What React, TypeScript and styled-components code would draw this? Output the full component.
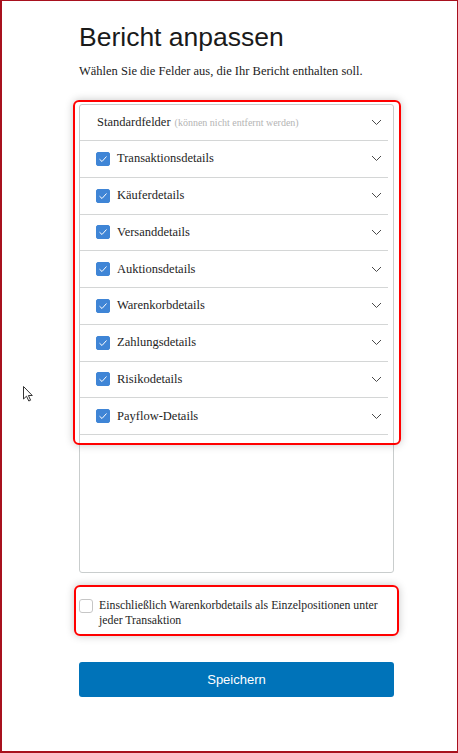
import { FC as ReactFC } from 'react'
import styled, { createGlobalStyle } from 'styled-components'

const GlobalStyle = createGlobalStyle`
  html, body {
    margin: 0;
    padding: 0;
    background: #fff;
  }
  * {
    box-sizing: border-box;
  }
`

const Frame = styled.div`
  position: relative;
  width: 458px;
  height: 753px;
  border: 1px solid #a8111e;
  border-left-width: 2px;
  border-bottom-width: 2px;
  background: #fff;
  padding: 0 0 0 77px;
  display: flex;
  flex-direction: column;
`

const Column = styled.div`
  width: 315px;
  display: flex;
  flex-direction: column;
`

const Title = styled.h1`
  margin: 20px 0 0;
  font-family: 'Liberation Sans', Arial, sans-serif;
  font-size: 26.5px;
  font-weight: 400;
  line-height: 32px;
  color: #1a1a1a;
`

const Intro = styled.p`
  margin: 10px 0 0;
  font-family: 'Liberation Serif', 'Times New Roman', serif;
  font-size: 12.5px;
  line-height: 16px;
  color: #222;
`

const ListWrap = styled.div`
  position: relative;
  margin-top: 25px;
`

const ListBox = styled.div`
  height: 469px;
  border: 1px solid #c9cdcd;
  border-radius: 3px;
  padding-right: 5px;
`

// red outline drawn over the top part of the list
const Highlight = styled.div`
  position: absolute;
  top: -4px;
  left: -6px;
  right: -7px;
  height: 345px;
  border: 2px solid #f00;
  border-radius: 6px;
  box-shadow: 0 0 8px rgba(0, 0, 0, 0.22);
  pointer-events: none;
`

const Row = styled.div<{ header?: boolean }>`
  height: ${({ header }) => (header ? 36 : 36.75)}px;
  display: flex;
  align-items: center;
  padding-left: ${({ header }) => (header ? 17 : 16)}px;
  padding-right: 6px;
  border-bottom: 1px solid #d4d6d6;
  font-family: 'Liberation Serif', 'Times New Roman', serif;
  font-size: 12.5px;
  color: #1e1e1e;
`

const Label = styled.span`
  flex: 1;
`

const Note = styled.span`
  margin-left: 4px;
  font-size: 10px;
  color: #b4b4b4;
`

const Box = styled.span<{ checked?: boolean }>`
  width: 14px;
  height: 14px;
  flex: none;
  display: inline-flex;
  align-items: center;
  justify-content: center;
  border-radius: ${({ checked }) => (checked ? 2 : 3)}px;
  background: ${({ checked }) => (checked ? '#3f85d6' : '#fff')};
  border: 1px solid ${({ checked }) => (checked ? '#3f85d6' : '#c6c6c6')};
  margin-right: 7px;
`

const Callout = styled.label`
  display: flex;
  align-items: flex-start;
  margin: 12px -5px 0 -5px;
  padding: 11px 8px 7px 3px;
  border: 2px solid #f00;
  border-radius: 6px;
  box-shadow: 0 0 8px rgba(0, 0, 0, 0.22);
  font-family: 'Liberation Serif', 'Times New Roman', serif;
  font-size: 11.8px;
  line-height: 14.5px;
  color: #1e1e1e;

  ${Box} {
    margin-top: 1px;
    margin-right: 6px;
  }
`

const SaveButton = styled.button`
  margin-top: 26px;
  height: 35px;
  width: 100%;
  border: none;
  border-radius: 3px;
  background: #0073b9;
  color: #fff;
  font-family: 'Liberation Sans', Arial, sans-serif;
  font-size: 13px;
`

const Pointer = styled.svg`
  position: absolute;
  left: 20px;
  top: 384px;
`

const Check = () => (
  <svg width="10" height="8" viewBox="0 0 10 8">
    <path d="M1.5 4.2 L4 6.5 L8.5 1.5" fill="none" stroke="#fff" strokeWidth="1" />
  </svg>
)

const Chevron = () => (
  <svg width="11" height="7" viewBox="0 0 11 7">
    <path d="M1 1 L5.5 5.5 L10 1" fill="none" stroke="#4a4a4a" strokeWidth="1" />
  </svg>
)

const sections = [
  'Transaktionsdetails',
  'Käuferdetails',
  'Versanddetails',
  'Auktionsdetails',
  'Warenkorbdetails',
  'Zahlungsdetails',
  'Risikodetails',
  'Payflow-Details',
]

const FieldRow: ReactFC<{ label: string }> = ({ label }) => (
  <Row>
    <Box checked>
      <Check />
    </Box>
    <Label>{label}</Label>
    <Chevron />
  </Row>
)

const App = () => (
  <>
    <GlobalStyle />
    <Frame>
      <Column>
        <Title>Bericht anpassen</Title>
        <Intro>Wählen Sie die Felder aus, die Ihr Bericht enthalten soll.</Intro>
        <ListWrap>
          <ListBox>
            <Row header>
              <Label>
                Standardfelder<Note>(können nicht entfernt werden)</Note>
              </Label>
              <Chevron />
            </Row>
            {sections.map((s) => (
              <FieldRow key={s} label={s} />
            ))}
          </ListBox>
          <Highlight />
        </ListWrap>
        <Callout>
          <Box />
          <span>Einschließlich Warenkorbdetails als Einzelpositionen unter jeder Transaktion</span>
        </Callout>
        <SaveButton>Speichern</SaveButton>
      </Column>
      <Pointer width="12" height="18" viewBox="0 0 12 18">
        <path
          d="M1.5 1.5 L1.5 14 L4.5 11.2 L6.8 16 L8.6 15.2 L6.4 10.5 L10.3 10.5 Z"
          fill="#fff"
          stroke="#333"
          strokeWidth="1"
          strokeLinejoin="round"
        />
      </Pointer>
    </Frame>
  </>
)

export default App
